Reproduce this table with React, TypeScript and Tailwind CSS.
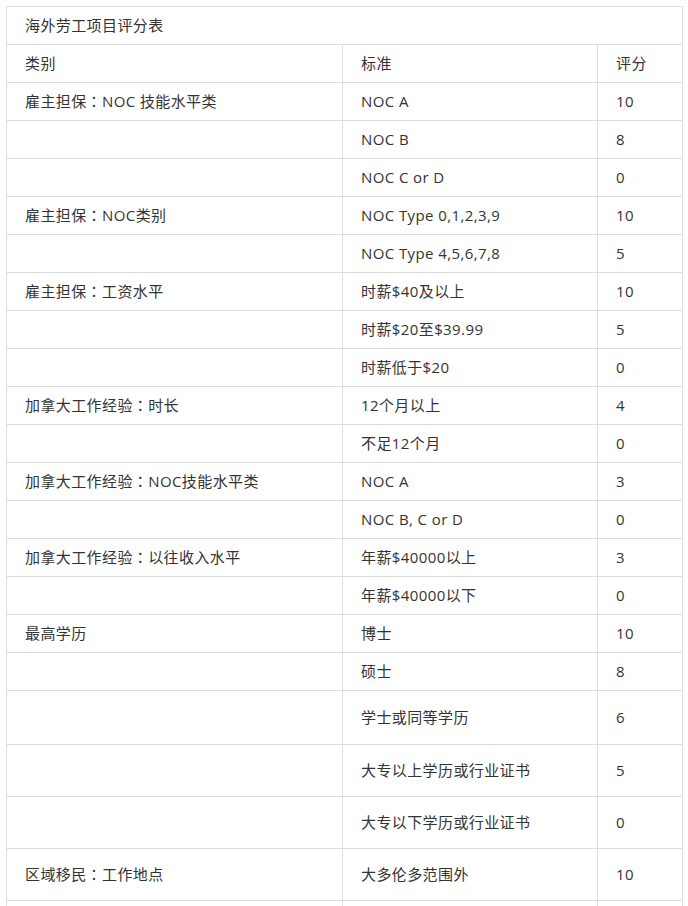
type Row = { cat: string; std: string; score: string; h?: string };

const rows: Row[] = [
  { cat: '雇主担保：NOC 技能水平类', std: 'NOC A', score: '10' },
  { cat: '', std: 'NOC B', score: '8' },
  { cat: '', std: 'NOC C or D', score: '0' },
  { cat: '雇主担保：NOC类别', std: 'NOC Type 0,1,2,3,9', score: '10' },
  { cat: '', std: 'NOC Type 4,5,6,7,8', score: '5' },
  { cat: '雇主担保：工资水平', std: '时薪$40及以上', score: '10' },
  { cat: '', std: '时薪$20至$39.99', score: '5' },
  { cat: '', std: '时薪低于$20', score: '0' },
  { cat: '加拿大工作经验：时长', std: '12个月以上', score: '4' },
  { cat: '', std: '不足12个月', score: '0' },
  { cat: '加拿大工作经验：NOC技能水平类', std: 'NOC A', score: '3' },
  { cat: '', std: 'NOC B, C or D', score: '0' },
  { cat: '加拿大工作经验：以往收入水平', std: '年薪$40000以上', score: '3' },
  { cat: '', std: '年薪$40000以下', score: '0' },
  { cat: '最高学历', std: '博士', score: '10' },
  { cat: '', std: '硕士', score: '8' },
  { cat: '', std: '学士或同等学历', score: '6', h: 'h-[54px]' },
  { cat: '', std: '大专以上学历或行业证书', score: '5', h: 'h-[52px]' },
  { cat: '', std: '大专以下学历或行业证书', score: '0', h: 'h-[52px]' },
  { cat: '区域移民：工作地点', std: '大多伦多范围外', score: '10', h: 'h-[52px]' },
  { cat: '', std: '', score: '', h: 'h-[52px]' },
];

const cell = 'border border-[#dddddd] pl-[18px] pr-2 text-left align-middle font-normal';

// 全角冒号居中显示
const Text = ({ s }: { s: string }) => {
  const parts = s.split('：');
  return (
    <>
      {parts.map((p, i) => (
        <span key={i}>
          {i > 0 && <span className="[font-family:'Noto_Sans_CJK_JP',sans-serif]">：</span>}
          {p}
        </span>
      ))}
    </>
  );
};

export default function App() {
  return (
    <div className="h-[906px] overflow-hidden bg-white pl-[6px] pt-[6px] text-[15px] tracking-[0.4px] text-[#333333] [font-family:'Open_Sans','Noto_Sans_CJK_SC',sans-serif]">
      <table className="w-[676px] table-fixed border-collapse">
        <colgroup>
          <col className="w-[336px]" />
          <col className="w-[255px]" />
          <col className="w-[85px]" />
        </colgroup>
        <tbody>
          <tr className="h-[38px]">
            <td colSpan={3} className={cell}>海外劳工项目评分表</td>
          </tr>
          <tr className="h-[38px]">
            <td className={cell}>类别</td>
            <td className={cell}>标准</td>
            <td className={cell}>评分</td>
          </tr>
          {rows.map((r, i) => (
            <tr key={i} className={r.h ?? 'h-[38px]'}>
              <td className={cell}><Text s={r.cat} /></td>
              <td className={cell}>{r.std}</td>
              <td className={cell}>{r.score}</td>
            </tr>
          ))}
        </tbody>
      </table>
    </div>
  );
}
